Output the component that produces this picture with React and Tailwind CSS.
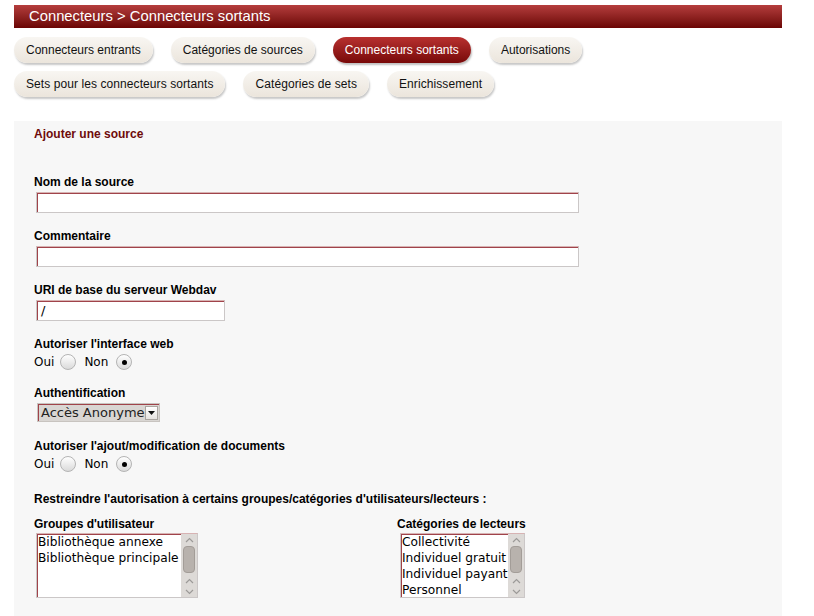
import React from 'react';

const TABS_1 = [
  { label: 'Connecteurs entrants' },
  { label: 'Catégories de sources' },
  { label: 'Connecteurs sortants', active: true },
  { label: 'Autorisations' },
];
const TABS_2 = [
  { label: 'Sets pour les connecteurs sortants' },
  { label: 'Catégories de sets' },
  { label: 'Enrichissement' },
];

const Tab = ({ label, active }) => (
  <div
    className={
      active
        ? 'h-[26px] px-[12px] flex items-center rounded-full bg-linear-to-b from-[#b8302f] to-[#780808] text-white shadow-[1px_2px_2px_rgba(0,0,0,0.25)]'
        : 'h-[26px] px-[12px] flex items-center rounded-full bg-linear-to-b from-[#f8f6f2] to-[#ebe5dc] text-[#111] shadow-[1px_2px_2px_rgba(0,0,0,0.22)]'
    }
  >
    {label}
  </div>
);

const Label = ({ children, className = '' }) => (
  <div className={`font-bold text-[12px] leading-[14px] text-black ${className}`}>{children}</div>
);

const TextInput = ({ width, value }) => (
  <div
    className={`${width} h-[21px] ml-[2px] bg-white border border-[#cbc7c7] border-t-[#d7b3b3] shadow-[inset_1px_1px_0_#a0434a] flex items-center pl-[4px] text-[13px] text-black`}
    style={{ fontFamily: '"DejaVu Sans", sans-serif' }}
  >
    {value}
  </div>
);

const Radio = ({ checked }) => (
  <span className="w-[16px] h-[16px] rounded-full border border-[#b4b4b4] bg-linear-to-b from-white to-[#dadada] flex items-center justify-center">
    {checked && <span className="w-[5px] h-[5px] rounded-full bg-black" />}
  </span>
);

const RadioRow = () => (
  <div
    className="mt-[2px] flex items-center h-[18px] text-[12px] text-black"
    style={{ fontFamily: '"DejaVu Sans", sans-serif' }}
  >
    <span>Oui</span>
    <span className="ml-[6px]"><Radio /></span>
    <span className="ml-[8px]">Non</span>
    <span className="ml-[8px]"><Radio checked /></span>
  </div>
);

const Chevron = ({ down }) => (
  <svg width="9" height="6" viewBox="0 0 9 6" className="block">
    <path
      d={down ? 'M1 1 L4.5 4.5 L8 1' : 'M1 5 L4.5 1.5 L8 5'}
      fill="none"
      stroke="#9c9a98"
      strokeWidth="1.2"
    />
  </svg>
);

const Scrollbar = () => (
  <div className="w-[16px] h-full bg-[#dddad7] flex flex-col items-center">
    <div className="h-[12px] flex items-center"><Chevron /></div>
    <div className="w-[12px] h-[27px] rounded-[4px] bg-[#b8b2ad] border border-[#a39d98]" />
    <div className="flex-1" />
    <div className="h-[11px] flex items-center"><Chevron /></div>
    <div className="h-[11px] flex items-center"><Chevron down /></div>
  </div>
);

const ListBox = ({ items, width }) => (
  <div
    className={`${width} h-[65px] bg-white border border-[#cbc7c7] border-t-[#d7b3b3] shadow-[inset_1px_1px_0_#a0434a] flex overflow-hidden`}
  >
    <div
      className="flex-1 pl-[1px] text-[12.2px] leading-[16px] text-black whitespace-nowrap overflow-hidden"
      style={{ fontFamily: '"DejaVu Sans", sans-serif' }}
    >
      {items.map((it) => (
        <div key={it}>{it}</div>
      ))}
    </div>
    <Scrollbar />
  </div>
);

export default function App() {
  return (
    <div className="min-h-screen bg-white pl-[14px] pt-[5px]" style={{ fontFamily: '"Liberation Sans", Arial, sans-serif' }}>
      <div className="w-[768px]">
        {/* breadcrumb bar */}
        <div className="h-[23px] bg-linear-to-b from-[#b53d3d] to-[#6b0404] text-white text-[14.8px] leading-[23px] pl-[15px]">
          Connecteurs &gt; Connecteurs sortants
        </div>

        {/* tabs */}
        <div className="mt-[9px] text-[12px] flex flex-col gap-[8px]">
          <div className="flex gap-[18px]">
            {TABS_1.map((t) => <Tab key={t.label} {...t} />)}
          </div>
          <div className="flex gap-[18px] tracking-[0.08px]">
            {TABS_2.map((t) => <Tab key={t.label} {...t} />)}
          </div>
        </div>

        {/* form panel */}
        <div className="mt-[24px] bg-[#f7f7f7] pl-[20px] pt-[6px] pb-[40px]">
          <div className="font-bold text-[12px] leading-[14px] text-[#6e0b0b]">Ajouter une source</div>

          <Label className="mt-[34px] mb-[3px]">Nom de la source</Label>
          <TextInput width="w-[543px]" />

          <Label className="mt-[16px] mb-[3px]">Commentaire</Label>
          <TextInput width="w-[543px]" />

          <Label className="mt-[16px] mb-[3px]">URI de base du serveur Webdav</Label>
          <TextInput width="w-[189px]" value="/" />

          <Label className="mt-[16px]">Autoriser l'interface web</Label>
          <RadioRow />

          <Label className="mt-[15px] mb-[3px]">Authentification</Label>
          <div className="ml-[3px] w-[123px] h-[19px] bg-[#d9d6d3] border border-[#c8c4c0] shadow-[inset_1px_1px_0_#a0434a] flex items-center overflow-hidden">
            <span
              className="flex-1 pl-[3px] text-[13px] text-[#222] whitespace-nowrap overflow-hidden"
              style={{ fontFamily: '"DejaVu Sans", sans-serif' }}
            >
              Accès Anonyme
            </span>
            <span className="w-[13px] h-[14px] mr-[1px] bg-linear-to-b from-white to-[#e6e3e0] border border-[#aaa5a0] flex items-center justify-center">
              <svg width="7" height="4" viewBox="0 0 7 4"><path d="M0 0 H7 L3.5 4 Z" fill="#111" /></svg>
            </span>
          </div>

          <Label className="mt-[17px]">Autoriser l'ajout/modification de documents</Label>
          <RadioRow />

          <Label className="mt-[19px]">Restreindre l'autorisation à certains groupes/catégories d'utilisateurs/lecteurs :</Label>

          <div className="mt-[11px] flex">
            <div className="w-[363px]">
              <Label className="mb-[2px]">Groupes d'utilisateur</Label>
              <div className="ml-[2px]">
                <ListBox width="w-[162px]" items={['Bibliothèque annexe', 'Bibliothèque principale']} />
              </div>
            </div>
            <div>
              <Label className="mb-[2px]">Catégories de lecteurs</Label>
              <div className="ml-[3px]">
                <ListBox
                  width="w-[125px]"
                  items={['Collectivité', 'Individuel gratuit', 'Individuel payant', 'Personnel']}
                />
              </div>
            </div>
          </div>
        </div>
      </div>
    </div>
  );
}
